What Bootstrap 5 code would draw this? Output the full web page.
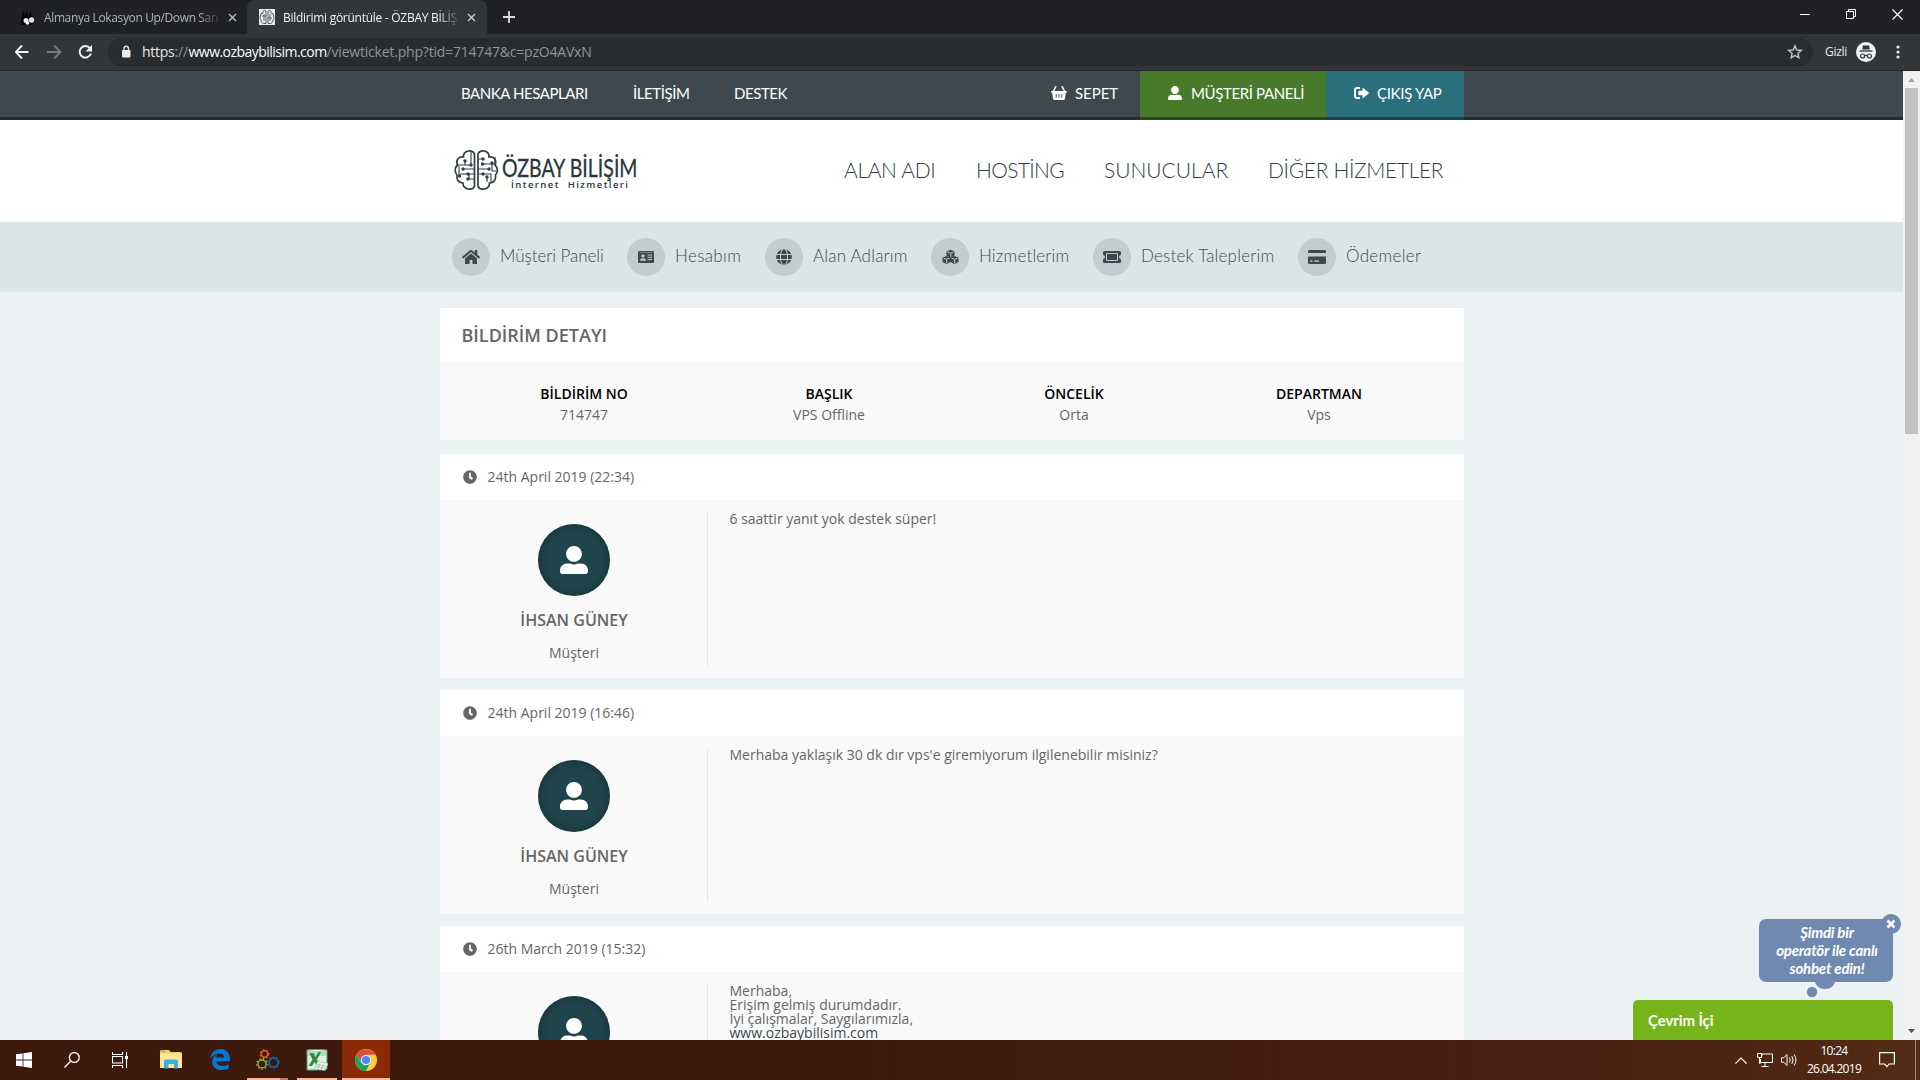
<!DOCTYPE html>
<html lang="tr">
<head>
<meta charset="utf-8">
<title>Bildirimi görüntüle - ÖZBAY BİLİŞİM</title>
<link href="https://cdn.jsdelivr.net/npm/bootstrap@5.3.0/dist/css/bootstrap.min.css" rel="stylesheet">
<style>
  html, body { height: 100%; overflow: hidden; }
  body { font-family: "Open Sans", "Noto Sans", sans-serif; font-size: 14px; line-height: 21px; color: #666; background: #ecf1f4; }
  svg { display: block; flex: none; }
  .screen { width: 1920px; height: 1080px; }
  .nowrap-all { white-space: nowrap; }

  /* browser frame */
  .tab-strip { height: 34px; background: #202124; font-size: 12px; }
  .tab-a { width: 247px; padding-left: 20px; color: #b0b5ba; }
  .tab-b { width: 240px; height: 34px; padding-left: 12px; background: #323639; border-radius: 8px 8px 0 0; color: #f1f3f4; }
  .tab-label { width: 176px; overflow: hidden; -webkit-mask-image: linear-gradient(90deg, #000 88%, transparent 101%); mask-image: linear-gradient(90deg, #000 88%, transparent 101%); }
  .tab-a .tab-label { letter-spacing: -.37px; }
  .tab-b .tab-label { letter-spacing: -.27px; }
  .win-buttons { gap: 36px; padding-right: 17px; margin-top: -6px; }
  .tool-row { height: 37px; background: #323639; border-bottom: 1px solid #26292b; padding-bottom: 1px; }
  .nav-icons { margin-left: 15px; }
  .omnibox { width: 1705px; height: 28px; border-radius: 14px; background: #282c2f; margin-left: 13px; padding: 0 10px 0 12px; color: #8f969b; }
  .omnibox .lock { margin-right: 10px; }
  .omnibox .addr-host { color: #fff; letter-spacing: -.53px; }
  .omnibox .addr-proto { color: #e8eaed; letter-spacing: -.26px; }
  .omnibox .addr-sep { letter-spacing: -.2px; width: 14px; }
  .omnibox .addr-path { letter-spacing: -.2px; }
  .private-label { font-size: 12px; color: #e8eaed; letter-spacing: -.29px; width: 22px; margin: 0 9px 0 12px; }
  .menu-dots { margin-left: 20px; }

  /* page */
  .viewport { height: 969px; }
  .page { width: 1903px; height: 969px; overflow: hidden; }
  .wrap { width: 1024px; margin-left: 440px; }
  .topbar { height: 49px; background: #3d494e; border-bottom: 3px solid #242d2f; font-family: Lato, sans-serif; font-size: 15px; color: #fff; }
  .topbar .wrap { height: 49px; }
  .top-link { letter-spacing: -.43px; }
  .link-bank { margin-left: 21px; width: 172px; }
  .link-contact { width: 101px; }
  .link-support { width: 317px; letter-spacing: -.44px; }
  .top-item { height: 49px; padding-bottom: 5px; }
  .item-cart { width: 89px; gap: 8px; letter-spacing: -.05px; }
  .item-panel { width: 186px; padding-left: 28px; gap: 9px; background: #477a2b; border-bottom: 3px solid #2b4a1b; padding-bottom: 2px; letter-spacing: -.38px; }
  .item-exit { width: 138px; padding-left: 28px; gap: 8px; background: #2b6f7c; border-bottom: 3px solid #1b434b; padding-bottom: 2px; letter-spacing: -.3px; }
  .masthead { height: 102px; background: #fff; }
  .masthead .wrap { height: 102px; font-family: Lato, sans-serif; font-weight: 300; font-size: 21px; color: #343d41; padding-bottom: 3px; }
  .brand-art { margin-left: 12px; width: 392px; }
  .m1 { width: 132px; letter-spacing: -.35px; } .m2 { width: 128px; letter-spacing: -.66px; }
  .m3 { width: 164px; } .m4 { letter-spacing: -.34px; }
  .subnav { height: 70px; background: #dae6e5; font-family: Lato, sans-serif; font-weight: 300; font-size: 17px; color: #3d494e; }
  .subnav .wrap { height: 70px; padding-left: 12px; }
  .sub-item { gap: 10px; }
  .sub-item span { padding-bottom: 4px; }
  .disc { width: 38px; height: 38px; border-radius: 50%; background: #c4cccd; fill: #3d494e; }
  .s1 { width: 175px; letter-spacing: -.05px; } .s2 { width: 138px; letter-spacing: .35px; } .s3 { width: 166px; letter-spacing: .2px; }
  .s4 { width: 162px; letter-spacing: .17px; } .s5 { width: 205px; letter-spacing: .2px; } .s6 { letter-spacing: .33px; }

  .panel-white { background: #fff; }
  .panel-soft { background: #f9f9f9; }
  .detail { margin-top: 16px; }
  .detail-title { height: 54px; padding-left: 21.5px; font-size: 18px; font-weight: 600; }
  .detail-body { height: 78px; padding: 21px 22.500px 0 21.500px; }
  .detail-body strong { display: block; color: #000; font-weight: 600; }
  .reply { margin-top: 12px; }
  .detail + .reply { margin-top: 14px; }
  .reply-head { height: 46px; padding: 0 0 1px 23px; gap: 10.5px; }
  .reply-body { height: 178px; padding: 12px 0; }
  .author { width: 268px; height: 154px; border-right: 1px solid #e6e6e6; padding-top: 12px; }
  .avatar-disc { width: 72px; height: 72px; border-radius: 50%; background: #1f444b; box-shadow: inset 0 0 8px rgba(0,0,0,.35); fill: #fff; padding-bottom: 1px; }
  .author-name { font-size: 16px; font-weight: 600; line-height: 24px; margin: 12px 0 0 1px; }
  .author-role { margin: 10px 0 0 1px; }
  .reply-text { padding-left: 21.500px; line-height: 14px; }
  .reply-text a { color: #3d494e; text-decoration: none; }

  .scroll-rail { width: 17px; background: #f1f1f1; padding: 7px 0; }
  .scroll-thumb { width: 13px; height: 346px; background: #c1c1c1; margin-top: 6px; }

  /* live chat floats above the page */
  .chat { position: absolute; left: 1633px; top: 910px; width: 275px; height: 130px; font-family: Lato, sans-serif; font-weight: 700; color: #fff; overflow: hidden; }
  .chat-bubble { position: absolute; left: 126px; top: 9px; width: 134px; height: 63px; border-radius: 7px; background: #7089b0; text-align: center; font-style: italic; font-size: 15px; line-height: 18px; letter-spacing: -.2px; padding: 4px 0 0 2px; }
  .chat-close { position: absolute; left: 248px; top: 4px; }
  .chat-tail { position: absolute; left: 170px; top: 66px; }
  .chat-bar { position: absolute; left: 0; top: 90px; width: 260px; height: 40px; border-radius: 5px 5px 0 0; background: #76b41c; padding-left: 15px; font-size: 15px; letter-spacing: -.1px; }

  .taskbar { height: 40px; background: linear-gradient(90deg, #3e1a0e 0, #3e1a0e 45%, #4a2013 85%, #542b14 100%); color: #fff; }
  .task-cell { width: 48px; height: 40px; border-bottom: 2px solid transparent; padding-top: 1px; }
  .cell-files { width: 54px; } .cell-edge { width: 44px; } .cell-gears { width: 41px; margin-left: 5px; }
  .cell-sheet { width: 40px; margin-left: 9px; } .cell-chrome { margin-left: 5px; }
  .is-running { border-bottom-color: #fbb89f; }
  .is-front { background: #8b2a06; }
  .is-stacked { border-image: linear-gradient(90deg, #fbb89f 78%, #b08070 78%) 2; border-bottom: 2px solid; border-top: 0; border-left: 0; border-right: 0; }
  .tray-net { margin-left: 10px; } .tray-sound { margin-left: 8px; } .tray-note { margin: 0 20px 0 12px; }
  .clock { width: 66px; font-size: 12px; line-height: 18px; letter-spacing: -.7px; margin-left: 3px; }
  .desk-edge { width: 5px; height: 40px; border-left: 1px solid #a58b7c; }
</style>
<script src="https://cdn.jsdelivr.net/npm/bootstrap@5.3.0/dist/js/bootstrap.bundle.min.js"></script>
</head>
<body>
<svg width="0" height="0" class="position-absolute">
  <symbol id="i-user" viewBox="0 0 512 512"><path d="M256 288c79.500 0 144-64.500 144-144S335.500 0 256 0 112 64.500 112 144s64.500 144 144 144zm128 32h-55.100c-22.200 10.200-46.900 16-72.900 16s-50.600-5.800-72.900-16H128C57.300 320 0 377.300 0 448v16c0 26.500 21.500 48 48 48h416c26.500 0 48-21.500 48-48v-16c0-70.700-57.300-128-128-128z"/></symbol>
  <symbol id="i-clock" viewBox="0 0 512 512"><path d="M256,8C119,8,8,119,8,256S119,504,256,504,504,393,504,256,393,8,256,8Zm57.100,350.100L224.900,294c-3.100-2.300-4.900-5.900-4.900-9.700V116a12,12,0,0,1,12-12h48a12,12,0,0,1,12,12V247.700l67,48.700a12,12,0,0,1,2.600,16.800L329.900,355.500A12,12,0,0,1,313.100,358.100Z"/></symbol>
</svg>
<div class="screen d-flex flex-column nowrap-all">
  <div class="tab-strip d-flex align-items-center flex-shrink-0">
    <div class="tab-a d-flex align-items-center">
      <svg width="16" height="16" viewBox="0 0 16 16" class="me-2"><path d="M1 16V9L4 1l1 7 2-7 1 7 3-6 1 8v6z" fill="#050505"/><circle cx="6" cy="11.500" r="2.500" fill="#eee"/><circle cx="11.500" cy="11" r="2.700" fill="#ddd"/><circle cx="7.500" cy="14" r="1.800" fill="#fff"/></svg>
      <div class="tab-label">Almanya Lokasyon Up/Down San</div>
      <svg width="9" height="9" viewBox="0 0 9 9" class="ms-2" stroke="#b4b8bc" stroke-width="1.500"><path d="M1 1l7 7M8 1l-7 7"/></svg>
    </div>
    <div class="tab-b d-flex align-items-center">
      <svg width="16" height="16" viewBox="0 0 16 16" class="me-2"><path fill="#e9eded" d="M0 0h16v16H0z"/><path d="M7 2v12.500M9 2v12.500M7 2Q4 0 4 4 1 4 1.500 7 0 9 2 11q0 4 5 3.500M9 2q3-2 3 2 3 0 2.500 3 1.500 2-.5 4 0 4-5 3.500M3 7h4M9 9h4M5 5v7M11 5v7" fill="none" stroke="#556064"/></svg>
      <div class="tab-label">Bildirimi görüntüle - ÖZBAY BİLİŞ</div>
      <svg width="9" height="9" viewBox="0 0 9 9" class="ms-2" stroke="#c4c7c9" stroke-width="1.500"><path d="M1 1l7 7M8 1l-7 7"/></svg>
    </div>
    <svg width="12" height="12" viewBox="0 0 12 12" class="ms-3" stroke="#dadce0" stroke-width="1.800"><path d="M6 0v12M0 6h12"/></svg>
    <div class="win-buttons d-flex align-items-center ms-auto">
      <svg width="10" height="10" viewBox="0 0 10 10" stroke="#fff"><path d="M0 5.500h10"/></svg>
      <svg width="10" height="10" viewBox="0 0 10 10" stroke="#fff" fill="none"><path d="M.5 2.500h7v7h-7zM2.500 2.500v-2h7v7h-2"/></svg>
      <svg width="11" height="11" viewBox="0 0 11 11" stroke="#fff" stroke-width="1.200"><path d="M.5.5l10 10M10.500.5l-10 10"/></svg>
    </div>
  </div>
  <div class="tool-row d-flex align-items-center flex-shrink-0">
    <svg width="80" height="16" viewBox="0 0 80 16" class="nav-icons" fill="none" stroke-width="1.900"><path d="M13.500 8H.5M7 1.500L.8 8 7 14.500" stroke="#f1f3f4"/><path d="M32 8h13M39 1.500L45.500 8 39 14.500" stroke="#76797c"/><path d="M75 4.200A5.800 5.800 0 1 0 76 9.500" stroke="#f1f3f4"/><path d="M77 1v6.500h-6.500z" fill="#f1f3f4"/></svg>
    <div class="omnibox d-flex align-items-center">
      <svg width="12" height="14" viewBox="0 0 12 14" class="lock"><rect x="2" y="5" width="8.500" height="7.500" rx="1" fill="#e8eaed"/><path d="M4 5V3.500a2.250 2.250 0 0 1 4.500 0V5" fill="none" stroke="#e8eaed" stroke-width="1.300"/></svg>
      <span class="addr-proto">https</span><span class="addr-sep">://</span><span class="addr-host">www.ozbaybilisim.com</span><span class="addr-path">/viewticket.php?tid=714747&amp;c=pzO4AVxN</span>
      <svg width="16" height="16" viewBox="0 0 16 16" class="ms-auto" fill="none" stroke="#c4c7c9" stroke-width="1.400"><path d="M8 1.800l1.800 4.200 4.500.4-3.400 3 1 4.400L8 11.500l-3.900 2.300 1-4.400-3.400-3L6.200 6z"/></svg>
    </div>
    <span class="private-label">Gizli</span>
    <svg width="20" height="20" viewBox="0 0 20 20"><circle cx="10" cy="10" r="10" fill="#f1f3f4"/><path d="M7 3.500h6l.8 4H6.200z" fill="#323639"/><path d="M3.500 9h13" stroke="#323639" stroke-width="1.400"/><g fill="none" stroke="#323639" stroke-width="1.200"><circle cx="6.600" cy="14" r="2"/><circle cx="13.400" cy="14" r="2"/><path d="M8.600 13.800q1.400-.8 2.800 0"/></g></svg>
    <svg width="4" height="14" viewBox="0 0 4 14" fill="#e8eaed" class="menu-dots"><circle cx="2" cy="2" r="1.600"/><circle cx="2" cy="7" r="1.600"/><circle cx="2" cy="12" r="1.600"/></svg>
  </div>

  <div class="viewport d-flex flex-shrink-0">
    <main class="page">
      <div class="topbar"><div class="wrap d-flex">
        <span class="top-item top-link link-bank d-flex align-items-center">BANKA HESAPLARI</span>
        <span class="top-item top-link link-contact d-flex align-items-center">İLETİŞİM</span>
        <span class="top-item top-link link-support d-flex align-items-center">DESTEK</span>
        <span class="top-item item-cart d-flex align-items-center">
          <svg width="16" height="14" viewBox="0 0 16 14"><path d="M4.800.6L2.600 5M11.200.6L13.400 5" stroke="#fff" stroke-width="1.500" stroke-linecap="round"/><path d="M.6 5h14.800q.6 0 .6.700t-.6.800h-.5l-1 6.200q-.2 1.300-1.400 1.300h-9Q2.300 14 2.100 12.700l-1-6.200H.6Q0 6.500 0 5.700T.6 5z" fill="#fff"/><path d="M5.200 7.800v4M8 7.800v4M10.800 7.800v4" stroke="#3d494e" stroke-width=".9"/></svg>SEPET</span>
        <span class="top-item item-panel d-flex align-items-center"><svg width="14" height="14" fill="#fff"><use href="#i-user"/></svg>MÜŞTERİ PANELİ</span>
        <span class="top-item item-exit d-flex align-items-center"><svg width="15" height="12" viewBox="0 0 15 12"><path d="M6 1H3Q1 1 1 3v6q0 2 2 2h3" fill="none" stroke="#fff" stroke-width="1.900"/><path d="M8.500 1.300q0-1 .8-.4L14.600 5.500q.4.500 0 1L9.300 11.100q-.8.600-.8-.4V8.200H5q-.7 0-.7-.7v-3q0-.7.700-.7h3.500z" fill="#fff"/></svg>ÇIKIŞ YAP</span>
      </div></div>
      <div class="masthead"><div class="wrap d-flex align-items-center">
        <div class="brand-art">
          <svg width="186" height="44" viewBox="-2 -2 186 44">
            <g fill="none" stroke="#343f42" stroke-width="1.700">
              <path d="M20.500 4C19-1 9 0 9.500 7 4 6 1.500 11 3.500 15 0 18 1 23 3 25c-1 5 2 8 6 8 0 7 10 8 11.500 3z"/>
              <path d="M24 4C25.500-1 35.500 0 35 7c5.500-1 8 4 6 8 3.500 3 2.500 8 .5 10 1 5-2 8-6 8 0 7-10 8-11.500 3z"/>
              <g stroke-width="1.100"><path d="M17 2v13H3M11 11v4M20 19h-11M5 16v10M14 24h-8M15 29v-5h5M20 29h-6M24 9h6M30 14h11v-7M24 19h11M38 14v7h4M24 24h13v8M33 27v5M30 14h-1"/></g>
            </g>
            <g fill="#343f42"><circle cx="11" cy="11" r="1.700"/><circle cx="17" cy="15" r="1.700"/><circle cx="9" cy="19" r="1.700"/><circle cx="14" cy="24" r="1.700"/><circle cx="5.500" cy="26" r="1.700"/><circle cx="14" cy="29" r="1.700"/><circle cx="29" cy="9" r="1.700"/><circle cx="28.500" cy="14" r="1.700"/><circle cx="35" cy="19" r="1.700"/><circle cx="38" cy="13" r="1.700"/><circle cx="29" cy="24" r="1.700"/><circle cx="33" cy="27" r="1.700"/></g>
            <text x="48" y="26.500" font-family="Lato, sans-serif" font-size="24.500" font-weight="400" fill="#2b3639" textLength="135.500" lengthAdjust="spacingAndGlyphs" stroke="#2b3639" stroke-width=".3">ÖZBAY BİLİŞİM</text>
            <text x="57" y="37.500" font-family="Open Sans, sans-serif" font-size="9.500" font-weight="600" fill="#2b3639" textLength="117" word-spacing="4">İnternet Hizmetleri</text>
          </svg>
        </div>
        <span class="m1">ALAN ADI</span><span class="m2">HOSTİNG</span><span class="m3">SUNUCULAR</span><span class="m4">DİĞER HİZMETLER</span>
      </div></div>
      <div class="subnav"><div class="wrap d-flex align-items-center">
        <div class="sub-item s1 d-flex align-items-center"><div class="disc d-flex align-items-center justify-content-center"><svg width="18" height="16" viewBox="0 0 576 512"><path d="M280.370 148.260L96 300.110V464a16 16 0 0 0 16 16l112.060-.290a16 16 0 0 0 15.920-16V368a16 16 0 0 1 16-16h64a16 16 0 0 1 16 16v95.640a16 16 0 0 0 16 16.050L464 480a16 16 0 0 0 16-16V300L295.670 148.260a12.190 12.190 0 0 0-15.300 0zM571.600 251.470L488 182.560V44.050a12 12 0 0 0-12-12h-56a12 12 0 0 0-12 12v72.610L318.470 43a48 48 0 0 0-61 0L4.340 251.470a12 12 0 0 0-1.600 16.900l25.500 31A12 12 0 0 0 45.150 301l235.220-193.740a12.190 12.190 0 0 1 15.300 0L530.900 301a12 12 0 0 0 16.900-1.600l25.500-31a12 12 0 0 0-1.700-16.930z"/></svg></div><span>Müşteri Paneli</span></div>
        <div class="sub-item s2 d-flex align-items-center"><div class="disc d-flex align-items-center justify-content-center"><svg width="16" height="12" viewBox="0 0 16 12"><rect width="16" height="12" rx="1.300"/><path d="M1.500 1.400h13" stroke="#98a3a6" stroke-width=".7"/><g fill="#c4cccd"><circle cx="5" cy="4.900" r="1.700"/><path d="M2 9.800Q2 7.200 5 7.200t3 2.600zM9.500 3.500H14v1H9.500zM9.500 5.700H14v1H9.500zM9.500 7.900H14v1H9.500z"/></g></svg></div><span>Hesabım</span></div>
        <div class="sub-item s3 d-flex align-items-center"><div class="disc d-flex align-items-center justify-content-center"><svg width="16" height="16" viewBox="0 0 496 512"><path d="M336.500 160C322 70.700 287.800 8 248 8s-74 62.700-88.500 152h177zM152 256c0 22.200 1.200 43.500 3.300 64h185.300c2.100-20.500 3.300-41.800 3.300-64s-1.200-43.500-3.300-64H155.300c-2.100 20.500-3.300 41.800-3.300 64zm324.700-96c-28.600-67.900-86.500-120.400-158-141.600 24.400 33.800 41.200 84.700 50 141.600h108zM177.200 18.400C105.800 39.600 47.800 92.100 19.300 160h108c8.700-56.900 25.500-107.800 49.900-141.600zM487.400 192H372.700c2.100 21 3.300 42.500 3.300 64s-1.200 43-3.300 64h114.600c5.500-20.500 8.600-41.800 8.600-64s-3.100-43.500-8.500-64zM120 256c0-21.500 1.200-43 3.300-64H8.600C3.200 212.500 0 233.800 0 256s3.200 43.500 8.600 64h114.600c-2-21-3.200-42.500-3.200-64zm39.500 96c14.500 89.300 48.700 152 88.500 152s74-62.700 88.500-152h-177zm159.300 141.600c71.400-21.200 129.400-73.700 158-141.600h-108c-8.800 56.900-25.600 107.800-50 141.600zM19.300 352c28.600 67.900 86.500 120.400 158 141.600-24.400-33.800-41.200-84.700-50-141.600h-108z"/></svg></div><span>Alan Adlarım</span></div>
        <div class="sub-item s4 d-flex align-items-center"><div class="disc d-flex align-items-center justify-content-center"><svg width="17" height="16" viewBox="0 0 17 16"><path d="M8.500.8l4 1.600v4.400l-4 1.700-4-1.700V2.400zM4.500 6.900l4 1.700V13l-4 1.900L.5 13V8.600zM12.500 6.900l4 1.700V13l-4 1.900-4-1.900V8.600z"/><g stroke="#c4cccd" stroke-width="1" fill="none"><path d="M5.500 3l3 1.200 3-1.200M1.500 9.200l3 1.200 3-1.200M9.500 9.200l3 1.200 3-1.200M8.800 4.500v3.300M4.700 10.500v3.600M12.700 10.500v3.600"/></g></svg></div><span>Hizmetlerim</span></div>
        <div class="sub-item s5 d-flex align-items-center"><div class="disc d-flex align-items-center justify-content-center"><svg width="18" height="12" viewBox="0 0 18 12"><path d="M1.500 0h15Q18 0 18 1.500V4a2 2 0 0 0 0 4v2.500q0 1.500-1.500 1.500h-15Q0 12 0 10.500V8a2 2 0 0 0 0-4V1.500Q0 0 1.500 0z"/><path d="M3.500 2.500h11v7h-11z" fill="none" stroke="#c4cccd"/></svg></div><span>Destek Taleplerim</span></div>
        <div class="sub-item s6 d-flex align-items-center"><div class="disc d-flex align-items-center justify-content-center"><svg width="18" height="14" viewBox="0 0 18 14"><path d="M1.500 0h15Q18 0 18 1.500V3H0V1.500Q0 0 1.500 0zM0 6.500h18v6q0 1.500-1.500 1.500h-15Q0 14 0 12.500z"/><path d="M2 10.500h2.500v1.300H2zM6 10.500h5v1.300H6z" fill="#c4cccd"/></svg></div><span>Ödemeler</span></div>
      </div></div>

      <div class="wrap">
        <section class="detail">
          <div class="detail-title panel-white d-flex align-items-center">BİLDİRİM DETAYI</div>
          <div class="detail-body panel-soft d-flex text-center">
            <div class="flex-fill w-25"><strong>BİLDİRİM NO</strong>714747</div>
            <div class="flex-fill w-25"><strong>BAŞLIK</strong>VPS Offline</div>
            <div class="flex-fill w-25"><strong>ÖNCELİK</strong>Orta</div>
            <div class="flex-fill w-25"><strong>DEPARTMAN</strong>Vps</div>
          </div>
        </section>
        <section class="reply">
          <div class="reply-head panel-white d-flex align-items-center"><svg width="14" height="14" fill="#666"><use href="#i-clock"/></svg>24th April 2019 (22:34)</div>
          <div class="reply-body panel-soft d-flex">
            <div class="author d-flex flex-column align-items-center"><div class="avatar-disc d-flex align-items-center justify-content-center"><svg width="28" height="28"><use href="#i-user"/></svg></div><div class="author-name">İHSAN GÜNEY</div><div class="author-role">Müşteri</div></div>
            <div class="reply-text">6 saattir yanıt yok destek süper!</div>
          </div>
        </section>
        <section class="reply">
          <div class="reply-head panel-white d-flex align-items-center"><svg width="14" height="14" fill="#666"><use href="#i-clock"/></svg>24th April 2019 (16:46)</div>
          <div class="reply-body panel-soft d-flex">
            <div class="author d-flex flex-column align-items-center"><div class="avatar-disc d-flex align-items-center justify-content-center"><svg width="28" height="28"><use href="#i-user"/></svg></div><div class="author-name">İHSAN GÜNEY</div><div class="author-role">Müşteri</div></div>
            <div class="reply-text">Merhaba yaklaşık 30 dk dır vps'e giremiyorum ilgilenebilir misiniz?</div>
          </div>
        </section>
        <section class="reply">
          <div class="reply-head panel-white d-flex align-items-center"><svg width="14" height="14" fill="#666"><use href="#i-clock"/></svg>26th March 2019 (15:32)</div>
          <div class="reply-body panel-soft d-flex">
            <div class="author d-flex flex-column align-items-center"><div class="avatar-disc d-flex align-items-center justify-content-center"><svg width="28" height="28"><use href="#i-user"/></svg></div></div>
            <div class="reply-text">Merhaba,<br>Erişim gelmiş durumdadır.<br>İyi çalışmalar, Saygılarımızla,<br><a href="#">www.ozbaybilisim.com</a></div>
          </div>
        </section>
      </div>
    </main>
    <div class="scroll-rail d-flex flex-column align-items-center">
      <svg width="7" height="4" viewBox="0 0 7 4" fill="#a3a3a3"><path d="M0 4L3.500 0 7 4z"/></svg>
      <div class="scroll-thumb"></div>
      <svg width="7" height="4" viewBox="0 0 7 4" fill="#505050" class="mt-auto"><path d="M0 0l3.500 4L7 0z"/></svg>
    </div>
  </div>

  <footer class="taskbar d-flex align-items-center flex-shrink-0">
    <div class="task-cell d-flex align-items-center justify-content-center"><svg width="16" height="16" viewBox="0 0 16 16" fill="#fff"><path d="M0 2.300L6.600 1.400v6.200H0zM7.400 1.300L16 0v7.600H7.400zM0 8.400h6.600v6.200L0 13.700zM7.400 8.400H16V16l-8.600-1.300z"/></svg></div>
    <div class="task-cell d-flex align-items-center justify-content-center"><svg width="16" height="16" viewBox="0 0 16 16" fill="none" stroke="#fff" stroke-width="1.300"><circle cx="10.300" cy="5.500" r="4.900"/><path d="M6.800 9L.5 15.500"/></svg></div>
    <div class="task-cell d-flex align-items-center justify-content-center"><svg width="16" height="16" viewBox="0 0 16 16" fill="none" stroke="#fff" stroke-width="1.100"><path d="M.5 4.500h10v6.500H.5zM.5 0v2.500h10V0M.5 16v-2.500h10V16M14.500 0v16"/><path d="M13 4h3v3h-3z" fill="#fff" stroke="none"/></svg></div>
    <div class="task-cell cell-files d-flex align-items-center justify-content-center"><svg width="22" height="19" viewBox="0 0 22 19"><path d="M0 1.500Q0 0 1.500 0H9l1.500 2H20.500Q22 2 22 3.500V18H0z" fill="#f4cf65"/><path d="M0 3.500h22V18H0z" fill="#ffe595"/><path d="M2 .8h3v1.400H2z" fill="#3cbdf0"/><path d="M4 18.500V11q0-1.500 1.500-1.500h11Q18 9.500 18 11v7.500h-4V14H8.500v4.500z" fill="#35b2e2"/></svg></div>
    <div class="task-cell cell-edge d-flex align-items-center justify-content-center"><svg width="20" height="21" viewBox="0 0 20 21"><path d="M0 10C1 4 4.500 0 10.500 0 17 0 20 4.500 20 10v2.200H6.200c.3 3 3 4.700 6.200 4.700 2.300 0 4.300-.6 6.200-1.700v4.200C16.600 20.500 14 21 11.300 21 5.500 21 2.200 17.200 2.200 12.700c0-3.500 2-6 5-7.300-.7 1-1 2-1.100 3.200h8c0-2.600-1.200-4.200-4.200-4.200C6.500 4.400 2.500 6.200 0 10z" fill="#0078d7"/></svg></div>
    <div class="task-cell cell-gears is-stacked d-flex align-items-center justify-content-center"><svg width="24" height="21" viewBox="0 0 24 21" fill="none"><g stroke-width="1.500"><circle cx="8.500" cy="5" r="3.200" stroke="#e4572e"/><circle cx="6" cy="15" r="4" stroke="#86b93b"/><circle cx="17.500" cy="13.500" r="4.500" stroke="#1a66a8"/></g><g stroke-width="1.300" stroke-dasharray="1.500 2.100"><circle cx="8.500" cy="5" r="4.300" stroke="#e4572e"/><circle cx="6" cy="15" r="5.300" stroke="#86b93b"/><circle cx="17.500" cy="13.500" r="5.700" stroke="#1a66a8"/></g></svg></div>
    <div class="task-cell cell-sheet is-running d-flex align-items-center justify-content-center"><svg width="22" height="22" viewBox="0 0 22 22"><path d="M1 1Q10-.5 21 1v19Q11 21.500 1 21z" fill="#dcefe0" stroke="#4d9e63"/><path d="M2 2h18v5H2z" fill="#b5dcbc"/><path d="M3.500 4h4l2 4 3-5h2.800l-4.500 7.500 4 6.500H11l-2.500-4L6 17H2.500l4-6.500z" fill="#2f8a42"/><path d="M8.500 20l3-7.500 10.500 2-3 7z" fill="#f5fbf5" stroke="#8fb598" stroke-width=".6"/><path d="M11 15.500l9 1.600M10.300 17.500l9 1.600M14 14l-2.500 6.500M17.500 14.500L15 21" stroke="#8fb598" stroke-width=".7"/></svg></div>
    <div class="task-cell cell-chrome is-running is-front d-flex align-items-center justify-content-center"><svg width="22" height="22" viewBox="0 0 22 22"><circle cx="11" cy="11" r="11" fill="#ffcd42"/><path d="M1.470 5.500A11 11 0 0 1 20.500 5.800H11L6.700 13.500z" fill="#db4c3f"/><path d="M1.470 5.500L6.300 13.700 11 16l4.300-2.500L11 22A11 11 0 0 1 1.470 5.500z" fill="#1da362"/><circle cx="11" cy="11" r="5.200" fill="#f1f1f1"/><circle cx="11" cy="11" r="4.100" fill="#4a8af4"/></svg></div>
    <div class="d-flex align-items-center ms-auto">
      <svg width="12" height="7" viewBox="0 0 12 7" fill="none" stroke="#fff" stroke-width="1.200"><path d="M.5 6.500L6 1l5.500 5.500"/></svg>
      <svg width="16" height="14" viewBox="0 0 16 14" fill="none" stroke="#fff" class="tray-net"><path d="M5 2.500V1h10.500v8.500H3.500V6M8 9.500v3.500M4.500 13.500h7M.5.500h4v4h-4zM2.500 4.500v6h1"/></svg>
      <svg width="17" height="14" viewBox="0 0 17 14" fill="none" stroke="#fff" class="tray-sound"><path d="M.5 4.800h2.200L6 1.500v11L2.700 9.200H.5zM8.500 4.500q1.500 2.500 0 5M10.800 3q2.600 4 0 8M13.100 1.500q3.700 5.500 0 11"/></svg>
      <div class="clock text-center">10:24<br>26.04.2019</div>
      <svg width="16" height="16" viewBox="0 0 16 16" fill="none" stroke="#fff" stroke-width="1.200" class="tray-note"><path d="M.6.600h14.800v11.400H10L8 14.500 5.500 12H.6z"/></svg>
      <div class="desk-edge"></div>
    </div>
  </footer>
</div>

<div class="chat nowrap-all">
  <div class="chat-bar d-flex align-items-center">Çevrim İçi</div>
  <svg class="chat-tail" width="36" height="24" viewBox="0 0 36 24" fill="#7089b0"><ellipse cx="22" cy="5" rx="10" ry="8"/><circle cx="9" cy="16" r="5.200"/></svg>
  <div class="chat-bubble">Şimdi bir<br>operatör ile canlı<br>sohbet edin!</div>
  <svg class="chat-close" width="20" height="20" viewBox="0 0 20 20"><circle cx="10" cy="10" r="10" fill="#7089b0"/><path d="M6.500 6.500l7 7M13.500 6.500l-7 7" stroke="#fff" stroke-width="2.600"/></svg>
</div>
</body>
</html>
